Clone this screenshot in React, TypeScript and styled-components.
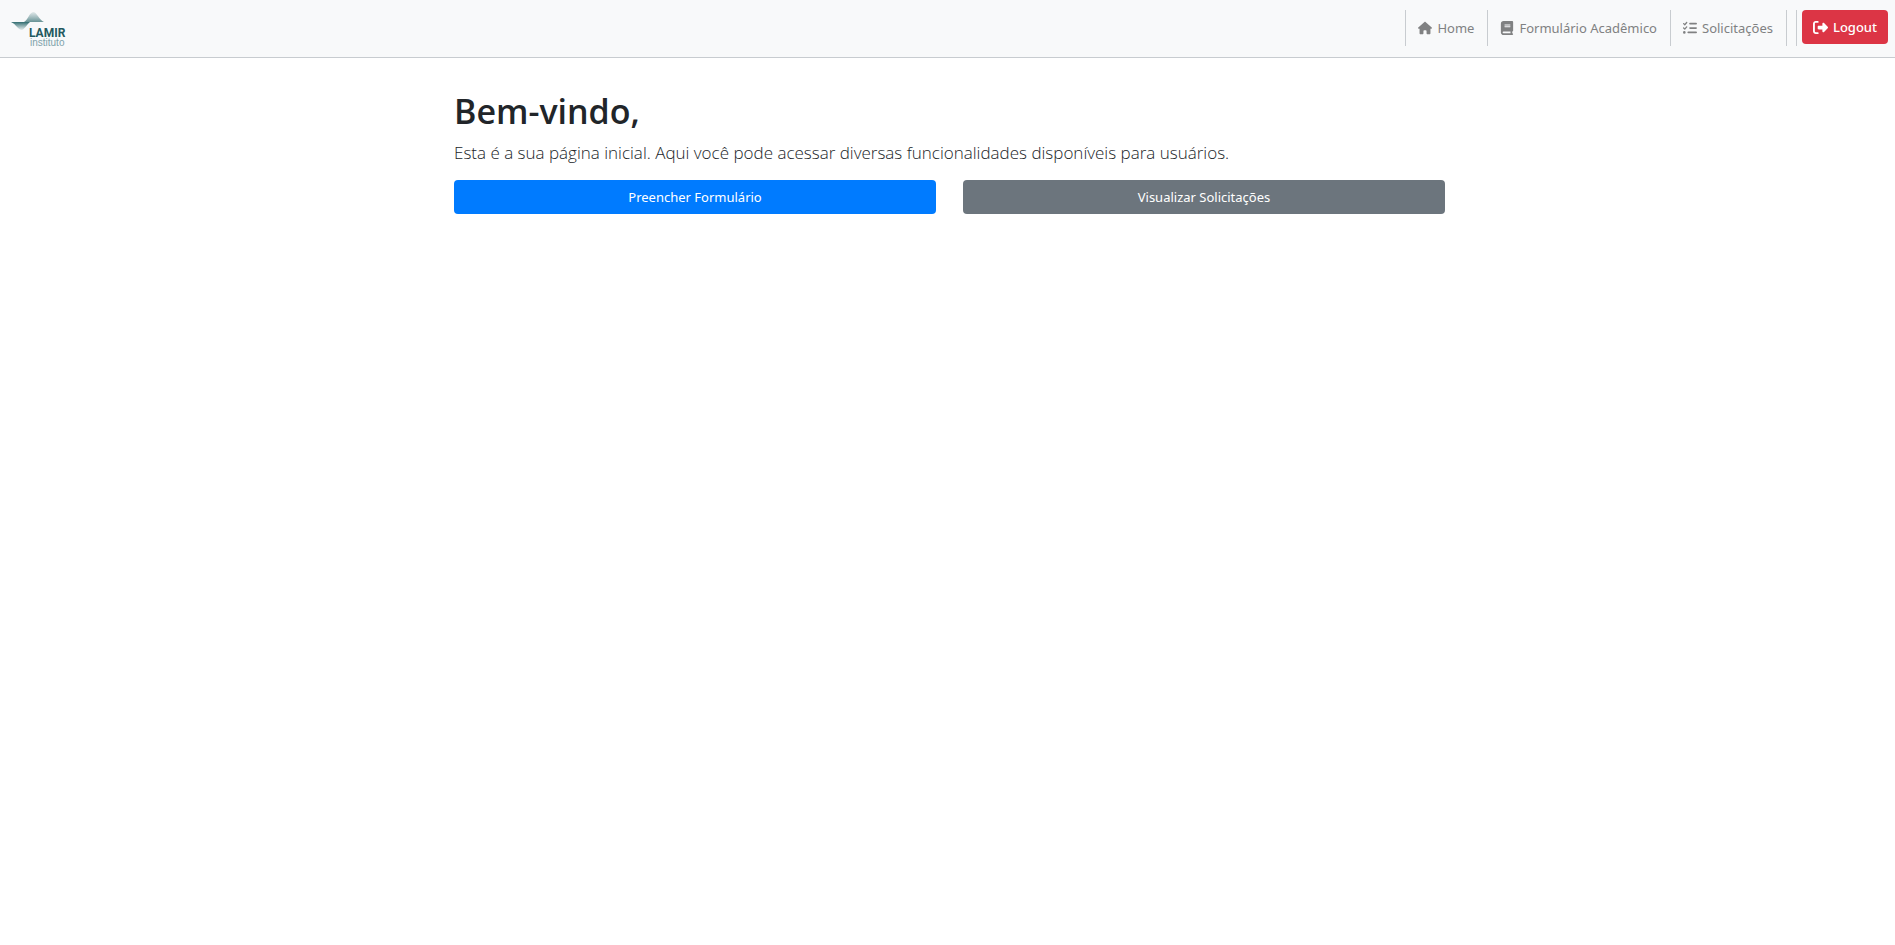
import React from "react";
import styled, { createGlobalStyle } from "styled-components";
import { FaHouse, FaBook, FaListCheck, FaRightFromBracket } from "react-icons/fa6";

const GlobalStyle = createGlobalStyle`
  *, *::before, *::after { box-sizing: border-box; }
  body {
    margin: 0;
    background: #fff;
    color: #212529;
    font-family: "Noto Sans", sans-serif;
    font-size: 13px;
    line-height: 20px;
  }
`;

const Navbar = styled.header`
  display: flex;
  align-items: flex-start;
  justify-content: space-between;
  height: 58px;
  padding: 10px 7px 0 11px;
  background: #f8f9fa;
  border-bottom: 1px solid #c8ccd0;
`;

const Brand = styled.a`
  display: block;
  line-height: 0;
`;

const LogoName = styled.text`
  font: 700 12px Roboto, sans-serif;
  fill: #24595f;
`;

const LogoCaption = styled.text`
  font: 400 10px "Liberation Sans", sans-serif;
  fill: #7fa3ab;
`;

const NavArea = styled.nav`
  display: flex;
`;

const NavList = styled.ul`
  display: flex;
  margin: 0;
  padding: 0;
  list-style: none;
`;

const NavItem = styled.li`
  height: 36px;
  border-left: 1px solid #c8ccd0;

  &:last-child {
    border-right: 1px solid #c8ccd0;
  }
`;

const NavLink = styled.a`
  display: flex;
  align-items: center;
  gap: 5px;
  height: 36px;
  padding: 0 13px 0 12px;
  color: #808182;
  text-decoration: none;
  white-space: nowrap;

  svg {
    width: auto;
    height: 14px;
  }
`;

const LogoutArea = styled.div`
  height: 36px;
  margin-left: 9px;
  padding-left: 5px;
  border-left: 1px solid #c8ccd0;
`;

const Button = styled.button<{ $color: string }>`
  height: 34px;
  padding: 0 11px;
  border: 0;
  border-radius: 4px;
  background: ${(p) => p.$color};
  color: #fff;
  font: inherit;
  cursor: pointer;
`;

const LogoutButton = styled(Button)`
  display: flex;
  align-items: center;
  gap: 5px;
  font-weight: 500;
`;

const Main = styled.main`
  max-width: 995px;
  margin: 0 auto;
  padding: 32px 0 0 4px;
  font-family: "Open Sans", sans-serif;
`;

const Title = styled.h1`
  margin: 0 0 8px;
  font-size: 34px;
  font-weight: 600;
  line-height: 43px;
`;

const Lead = styled.p`
  margin: 0 0 15px;
  font-size: 17px;
  font-weight: 300;
  line-height: 24px;
`;

const Actions = styled.div`
  display: grid;
  grid-template-columns: 1fr 1fr;
  gap: 27px;
  font-family: "Noto Sans", sans-serif;
`;

function Logo() {
  return (
    <svg width="58" height="40" viewBox="0 -1 58 40" role="img" aria-label="LAMIR instituto">
      <defs>
        <linearGradient id="peak" x1="0" y1="0" x2="0" y2="1">
          <stop offset="0" stopColor="#5d8c8f" stopOpacity="0.15" />
          <stop offset="1" stopColor="#4d8083" stopOpacity="0.85" />
        </linearGradient>
        <linearGradient id="valley" x1="0" y1="0" x2="0" y2="1">
          <stop offset="0" stopColor="#2f6b6f" />
          <stop offset="1" stopColor="#5d8c8f" stopOpacity="0.15" />
        </linearGradient>
      </defs>
      <path d="M0 11H19C16 13 14 18 11 19C7 19 5 13 0 11Z" fill="url(#valley)" />
      <path d="M13 11C17 9 18 2 22 1C26 1 28 9 33 11Z" fill="url(#peak)" />
      <LogoName x="18" y="26">LAMIR</LogoName>
      <LogoCaption x="19" y="35">instituto</LogoCaption>
    </svg>
  );
}

const links = [
  { label: "Home", Icon: FaHouse },
  { label: "Formulário Acadêmico", Icon: FaBook },
  { label: "Solicitações", Icon: FaListCheck },
];

export default function App() {
  return (
    <>
      <GlobalStyle />
      <Navbar>
        <Brand href="#">
          <Logo />
        </Brand>
        <NavArea>
          <NavList>
            {links.map(({ label, Icon }) => (
              <NavItem key={label}>
                <NavLink href="#">
                  <Icon aria-hidden />
                  {label}
                </NavLink>
              </NavItem>
            ))}
          </NavList>
          <LogoutArea>
            <LogoutButton type="button" $color="#dc3545">
              <FaRightFromBracket size={15} aria-hidden />
              Logout
            </LogoutButton>
          </LogoutArea>
        </NavArea>
      </Navbar>
      <Main>
        <Title>Bem-vindo,</Title>
        <Lead>Esta é a sua página inicial. Aqui você pode acessar diversas funcionalidades disponíveis para usuários.</Lead>
        <Actions>
          <Button type="button" $color="#007bff">Preencher Formulário</Button>
          <Button type="button" $color="#6c757d">Visualizar Solicitações</Button>
        </Actions>
      </Main>
    </>
  );
}
